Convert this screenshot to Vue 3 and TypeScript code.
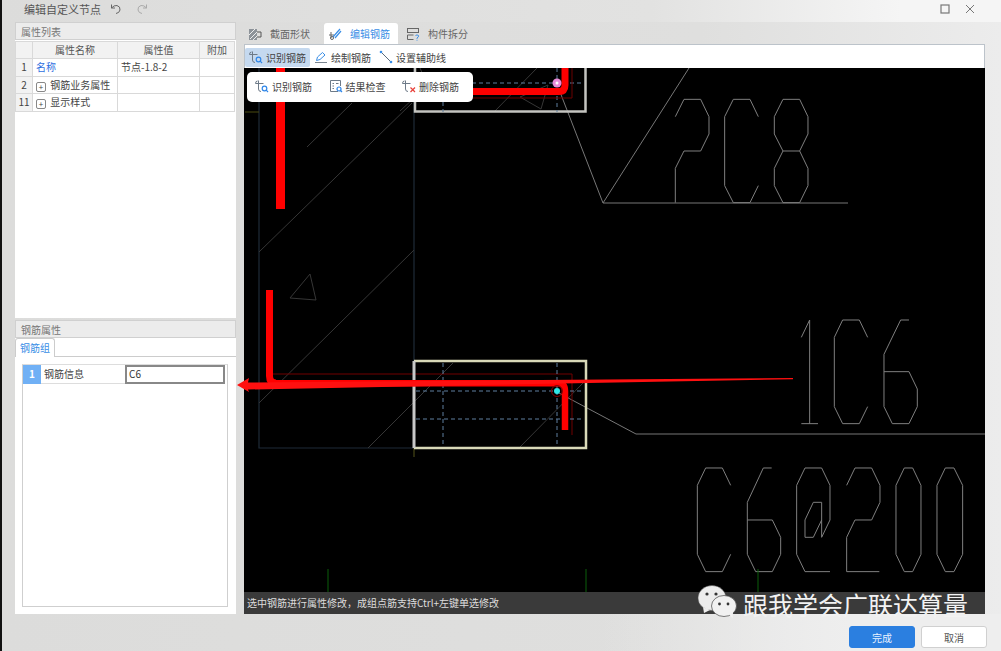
<template>
  <div class="window">
    <!-- 共用图标 -->
    <svg class="icon-defs" width="0" height="0">
      <symbol id="ic-rebar" viewBox="0 0 14 14">
        <path d="M.5 4.500h8M3.500 1.500v8.500q0 2.500 2.500 2.500M.5 4.500q0-2.500 2-2.500" fill="none" stroke="#6d7a88" stroke-width="1" />
        <circle cx="9.500" cy="9.500" r="2.300" fill="none" stroke="#2f86e8" stroke-width="1.200" />
        <path d="M11.200 11.200l1.800 1.800" stroke="#2f86e8" stroke-width="1.200" />
      </symbol>
      <symbol id="ic-check" viewBox="0 0 14 14">
        <path d="M9 12.500H1.500v-11h10V7" fill="none" stroke="#6d7a88" stroke-width="1" />
        <path d="M3.500 4.500h1.500M7 4.500h2.500M3.500 7h1.500M3.500 9.500h1.500" stroke="#6d7a88" stroke-width="1" />
        <circle cx="10" cy="10" r="2" fill="none" stroke="#2f86e8" stroke-width="1.200" />
        <path d="M11.500 11.500l1.500 1.500" stroke="#2f86e8" stroke-width="1.200" />
      </symbol>
      <symbol id="ic-delete" viewBox="0 0 14 14">
        <path d="M.5 4.500h8M3.500 1.500v8.500q0 2.500 2.500 2.500M.5 4.500q0-2.500 2-2.500" fill="none" stroke="#6d7a88" stroke-width="1" />
        <path d="M8.500 8.500l4.500 4.500M13 8.500l-4.500 4.500" stroke="#e8403a" stroke-width="1.200" />
      </symbol>
    </svg>

    <div class="titlebar">
      <span class="title">编辑自定义节点</span>
      <svg class="undo" width="12" height="12" viewBox="0 0 12 12">
        <path d="M1.500 1.500v3.500h3.500M1.500 5Q4 2 7 2.500q3.500 1 3 4.500-.6 3-4 3.500" fill="none" stroke="#666" stroke-width="1" />
      </svg>
      <svg class="redo" width="12" height="12" viewBox="0 0 12 12">
        <path d="M10.500 1.500v3.500H7M10.500 5Q8 2 5 2.500q-3.500 1-3 4.500.6 3 4 3.500" fill="none" stroke="#aaa" stroke-width="1" />
      </svg>
      <span class="grow"></span>
      <svg class="win-btn" width="10" height="10" viewBox="0 0 10 10">
        <rect x="1" y="1" width="8" height="8" fill="none" stroke="#777" stroke-width="1.200" />
      </svg>
      <svg class="win-btn" width="10" height="10" viewBox="0 0 10 10">
        <path d="M1 1l8 8M9 1l-8 8" stroke="#777" stroke-width="1" />
      </svg>
    </div>

    <div class="main">
      <div class="left">
        <section class="panel list-panel">
          <div class="panel-head">属性列表</div>
          <table class="prop-table">
            <colgroup>
              <col class="c-idx" />
              <col class="c-name" />
              <col class="c-val" />
              <col class="c-add" />
            </colgroup>
            <thead>
              <tr>
                <th></th>
                <th>属性名称</th>
                <th>属性值</th>
                <th>附加</th>
              </tr>
            </thead>
            <tbody>
              <tr v-for="row in propRows" :key="row.idx">
                <td class="idx">{{ row.idx }}</td>
                <td :class="{ 'link-name': !row.expand }">
                  <span v-if="row.expand" class="plus">+</span>
                  {{ row.name }}
                </td>
                <td>{{ row.value }}</td>
                <td></td>
              </tr>
            </tbody>
          </table>
        </section>

        <section class="panel rebar-panel">
          <div class="panel-head">钢筋属性</div>
          <div class="sub-tabs"><span class="sub-tab">钢筋组</span></div>
          <div class="rebar-body">
            <div class="rebar-box">
              <div class="rebar-row">
                <span class="rebar-idx">1</span>
                <span class="rebar-label">钢筋信息</span>
                <span class="rebar-input">C6</span>
              </div>
            </div>
          </div>
        </section>
      </div>

      <div class="right">
        <div class="tabs">
          <div class="tab">
            <svg width="14" height="14" viewBox="0 0 14 14">
              <rect x="1" y="2" width="8" height="11" fill="#8d9399" />
              <path d="M1 8l6-6M2 12l7-7M5 13l4-4" stroke="#eee" stroke-width="1" />
              <path d="M9 5h4v5H9" fill="none" stroke="#555" stroke-width="1" />
            </svg>
            截面形状
          </div>
          <div class="tab active">
            <svg width="14" height="14" viewBox="0 0 14 14">
              <path d="M3 5v6M1 8h5" fill="none" stroke="#666" stroke-width="1" />
              <path d="M5 10L12 2M7 11l6-7" fill="none" stroke="#3a8ee6" stroke-width="1.200" />
              <circle cx="4" cy="11" r="1.500" fill="none" stroke="#666" stroke-width="1" />
            </svg>
            编辑钢筋
          </div>
          <div class="tab">
            <svg width="14" height="14" viewBox="0 0 14 14">
              <rect x="1.500" y="1.500" width="11" height="4" fill="none" stroke="#666" stroke-width="1" />
              <path d="M1.500 8h6M1.500 8v4.500h6" fill="none" stroke="#666" stroke-width="1" />
              <path d="M9.500 8.500q1.500-1.200 3 0 .5 1.500-1.500 2.500v.8M11 12.800v.8" fill="none" stroke="#3a8ee6" stroke-width="1" />
            </svg>
            构件拆分
          </div>
        </div>

        <div class="toolbar">
          <div class="tool active">
            <svg width="14" height="14"><use href="#ic-rebar" /></svg>
            识别钢筋
          </div>
          <div class="tool">
            <svg width="14" height="14" viewBox="0 0 14 14">
              <path d="M1 12.500h12" stroke="#7a8590" stroke-width="1" />
              <path d="M2.500 10.500l1-3.500 5-4.500 2.500 2.500-5 4.500z" fill="none" stroke="#3a8ee6" stroke-width="1" />
            </svg>
            绘制钢筋
          </div>
          <div class="tool">
            <svg width="14" height="14" viewBox="0 0 14 14">
              <path d="M1.500 1.500l11 11" stroke="#5a6a7a" stroke-width="1" />
              <circle cx="2" cy="2" r="1.300" fill="#3a8ee6" />
              <circle cx="12" cy="12" r="1.300" fill="#3a8ee6" />
            </svg>
            设置辅助线
          </div>
        </div>

        <div class="canvas">
          <svg class="drawing" width="741" height="524" viewBox="244 68 741 524">
            <!-- 结构轮廓 -->
            <g fill="none" stroke="#1f2b38" stroke-width="1.200">
              <path d="M259 68V448H414V68" />
            </g>
            <path d="M245 112H259" stroke="#4a4a10" stroke-width="1" />
            <path d="M414 448V457" stroke="#55551a" stroke-width="1" />

            <!-- 填充斜线 -->
            <g fill="none" stroke="#363636" stroke-width="1">
              <path d="M259 252L412 103" />
              <path d="M307 147L352 103" />
              <path d="M259 403L414 250" />
              <path d="M368 448L453 363" />
              <path d="M520 447L583 383" />
              <path d="M494 112L537 68" />
              <path d="M400 111L414 98" />
              <path d="M420 68L423 75" />
              <path d="M310 274L290 298L316 300Z" />
              <path d="M520 97L548 85L541 109L520 97" />
            </g>

            <!-- 引线 -->
            <g fill="none" stroke="#777" stroke-width="1">
              <path d="M557 392L636 434H985" />
              <path d="M560 92L603 203H848" />
              <path d="M603 203L689 68" />
            </g>

            <!-- 上部箍筋框 -->
            <path d="M415 68V111.500H585.500V68" fill="none" stroke="#c4c4c0" stroke-width="2.500" />
            <g fill="none" stroke="#5f7f9f" stroke-width="1" stroke-dasharray="4 3">
              <path d="M416 83H584" />
              <path d="M557 68V112" />
              <path d="M443 102V112" />
            </g>
            <path d="M473 98H572V68" fill="none" stroke="#6a0000" stroke-width="1" />
            <path d="M473 91.500H559Q565 91.500 565 85V68" fill="none" stroke="#ff0000" stroke-width="7" />
            <circle cx="557" cy="83" r="4.500" fill="#e88ad8" />
            <circle cx="557" cy="83" r="1.500" fill="#fff" />

            <!-- 左侧红色钢筋 -->
            <rect x="276" y="68" width="9" height="141" fill="#ff0000" />
            <path d="M269.500 290V376Q269.500 383 276 383" fill="none" stroke="#ff0000" stroke-width="7" />
            <path d="M273 374H572V435" fill="none" stroke="#700000" stroke-width="1" />

            <!-- 下部箍筋框 -->
            <path d="M414 361H586V448H414" fill="none" stroke="#d9d9b8" stroke-width="2.500" />
            <path d="M414 361V448" fill="none" stroke="#c8c8c8" stroke-width="3" />
            <g fill="none" stroke="#5f7f9f" stroke-width="1" stroke-dasharray="4 3">
              <path d="M416 391H584" />
              <path d="M416 419H584" />
              <path d="M443 363V446" />
              <path d="M557 363V446" />
            </g>
            <path d="M270 383.300H558Q565 383.300 565 391V430" fill="none" stroke="#ff0000" stroke-width="6.500" />
            <circle cx="557" cy="391" r="5.500" fill="none" stroke="#8a0000" stroke-width="1" />
            <circle cx="557" cy="391" r="3" fill="#2fe6e6" />

            <!-- 标注箭头 -->
            <path d="M237 385L249 378L248 382.500L793 378L793 379.200L248 389.500L249 392Z" fill="#ff1010" />

            <!-- 2C8 -->
            <g transform="translate(590 70) scale(.3333)" fill="none" stroke="#808080" stroke-width="3">
              <polyline v-for="(p, i) in text2c8" :key="i" :points="p" />
            </g>
            <!-- 1C6 和 C6@200 -->
            <g transform="translate(680 300) scale(.3333)" fill="none" stroke="#808080" stroke-width="3">
              <polyline v-for="(p, i) in textLower" :key="i" :points="p" />
            </g>

            <!-- 绿色轴线 -->
            <g stroke="#0b5e0b" stroke-width="1">
              <path d="M328 569V592" />
              <path d="M586 569V592" />
              <path d="M758 569V592" />
            </g>
          </svg>

          <div class="popup">
            <div class="pop-item">
              <svg width="14" height="14"><use href="#ic-rebar" /></svg>
              识别钢筋
            </div>
            <div class="pop-item">
              <svg width="14" height="14"><use href="#ic-check" /></svg>
              结果检查
            </div>
            <div class="pop-item">
              <svg width="14" height="14"><use href="#ic-delete" /></svg>
              删除钢筋
            </div>
          </div>

          <div class="status">选中钢筋进行属性修改，成组点筋支持Ctrl+左键单选修改</div>

          <div class="watermark">
            <svg class="wechat" width="42" height="35" viewBox="0 0 42 35">
              <ellipse cx="15" cy="13" rx="14" ry="12.500" fill="#ececec" stroke="#555" stroke-width=".5" />
              <path d="M6 22l1 6 6-3z" fill="#ececec" />
              <circle cx="10" cy="9" r="1.600" fill="#333" />
              <circle cx="19" cy="9" r="1.600" fill="#333" />
              <ellipse cx="27" cy="21" rx="12.500" ry="10.500" fill="#f1f1f1" stroke="#444" stroke-width=".7" />
              <path d="M32 29l3.500 4.500 .5-6z" fill="#f1f1f1" />
              <circle cx="22.500" cy="19" r="1.400" fill="#333" />
              <circle cx="31" cy="19" r="1.400" fill="#333" />
            </svg>
            <span class="wm-text">跟我学会广联达算量</span>
          </div>
        </div>
      </div>
    </div>

    <div class="footer">
      <button class="btn primary">完成</button>
      <button class="btn">取消</button>
    </div>
  </div>
</template>

<script setup lang="ts">
interface PropRow {
  idx: number;
  name: string;
  value: string;
  expand: boolean;
}

const propRows: PropRow[] = [
  { idx: 1, name: '名称', value: '节点-1.8-2', expand: false },
  { idx: 2, name: '钢筋业务属性', value: '', expand: true },
  { idx: 11, name: '显示样式', value: '', expand: true },
];

// CAD 单线字，坐标按参考图放大 3 倍记录
const text2c8: string[] = [
  '256,140 282,88 332,88 357,140 357,192 332,243 282,243 256,295 256,398',
  '505,140 480,88 430,88 404,140 404,347 430,398 480,398 505,347',
  '579,243 553,192 553,140 579,88 629,88 654,140 654,192 629,243 579,243 553,295 553,347 579,398 629,398 654,347 654,295 629,243',
];

const textLower: string[] = [
  // 1C6
  '364,112 389,60 389,371',
  '364,371 414,371',
  '563,112 538,60 488,60 463,112 463,320 488,371 538,371 563,320',
  '687,60 662,60 612,163 612,320 637,371 687,371 712,320 712,267 687,215 612,215',
  // C6@200
  '152,556 127,504 77,504 52,556 52,763 77,815 127,815 152,763',
  '275,504 250,504 202,607 202,763 227,815 277,815 302,763 302,712 277,660 202,660',
  '450,815 375,815 350,763 350,556 375,504 425,504 450,556 450,660 425,712 425,607 400,607 375,660 375,712 400,712 425,660',
  '500,556 525,504 575,504 600,556 600,607 575,660 525,660 500,712 500,815 598,815',
  '673,504 698,504 723,556 723,763 698,815 673,815 648,763 648,556 673,504',
  '796,504 822,504 848,556 848,763 822,815 796,815 771,763 771,556 796,504',
];
</script>

<style>
html,
body {
  margin: 0;
  overflow: hidden;
}
</style>

<style scoped>
.window {
  box-sizing: border-box;
  width: 1001px;
  height: 651px;
  display: flex;
  flex-direction: column;
  border-left: 2px solid #111;
  background: linear-gradient(90deg, #dcdcdb 0%, #dfdfde 70%, #ececec 100%);
  font-family: "Noto Sans CJK SC", "Noto Sans", sans-serif;
  font-size: 10px;
  color: #444;
  overflow: hidden;
}

.icon-defs {
  position: absolute;
}

/* 标题栏 */
.titlebar {
  height: 22px;
  display: flex;
  align-items: center;
  padding: 0 26px 4px 22px;
  box-sizing: border-box;
  background: linear-gradient(90deg, #dcdcdb 0%, #e2e2e1 65%, #f5f5f5 90%);
}
.title {
  font-size: 11px;
  color: #555;
}
.undo {
  margin-left: 9px;
}
.redo {
  margin-left: 14px;
}
.grow {
  flex: 1;
}
.win-btn {
  margin-left: 15px;
}

.main {
  height: 592px;
  display: flex;
  gap: 8px;
  padding-left: 13px;
}

/* 左侧面板 */
.left {
  width: 221px;
  display: flex;
  flex-direction: column;
  gap: 2px;
}
.panel {
  background: #fff;
  display: flex;
  flex-direction: column;
}
.list-panel {
  height: 296px;
}
.rebar-panel {
  flex: 1;
}
.panel-head {
  height: 18px;
  line-height: 18px;
  box-sizing: border-box;
  padding-left: 5px;
  background: #ececec;
  border: 1px solid #d0d0d0;
  color: #777;
}
.prop-table {
  width: 219px;
  border-collapse: collapse;
  table-layout: fixed;
  margin-top: 1px;
}
.c-idx {
  width: 17px;
}
.c-name {
  width: 85px;
}
.c-val {
  width: 82px;
}
.c-add {
  width: 35px;
}
.prop-table th,
.prop-table td {
  border: 1px solid #d9d9d9;
  padding: 0;
  font-weight: 400;
  white-space: nowrap;
  overflow: hidden;
}
.prop-table th {
  height: 16px;
  line-height: 16px;
  background: #f2f2f2;
  text-align: center;
  color: #555;
}
.prop-table td {
  height: 16.5px;
  line-height: 14px;
  padding-left: 3px;
  color: #444;
}
.prop-table td.idx {
  background: #f2f2f2;
  padding: 0;
  text-align: center;
}
.prop-table td.link-name {
  color: #2f6fe0;
}
.plus {
  display: inline-block;
  box-sizing: border-box;
  width: 10px;
  height: 10px;
  margin-right: 2px;
  border: 1px solid #888;
  border-radius: 2px;
  font-size: 8px;
  line-height: 8px;
  text-align: center;
  vertical-align: -1px;
}
.sub-tabs {
  height: 19px;
  background: #fff;
  border-bottom: 1px solid #ccc;
  box-sizing: border-box;
}
.sub-tab {
  display: inline-block;
  box-sizing: border-box;
  width: 40px;
  height: 19px;
  line-height: 17px;
  text-align: center;
  color: #3a8ee6;
  background: #fff;
  border: 1px solid #ccc;
  border-bottom: none;
  border-radius: 3px 3px 0 0;
}
.rebar-body {
  flex: 1;
  padding: 7px 8px 7px 7px;
  display: flex;
}
.rebar-box {
  flex: 1;
  border: 1px solid #cfcfcf;
  border-top-color: #ddd;
}
.rebar-row {
  display: grid;
  grid-template-columns: 18px 84px 100px;
  height: 18px;
  line-height: 18px;
}
.rebar-idx {
  background: #70b0f5;
  color: #fff;
  text-align: center;
  font-weight: 700;
}
.rebar-label {
  padding-left: 3px;
  border-bottom: 1px solid #ddd;
}
.rebar-input {
  box-sizing: border-box;
  border: 2px solid #888;
  padding-left: 2px;
  line-height: 14px;
  color: #333;
}

/* 右侧主区 */
.right {
  width: 741px;
  display: flex;
  flex-direction: column;
}
.tabs {
  box-sizing: border-box;
  height: 22px;
  padding-top: 1px;
  display: flex;
  gap: 6px;
}
.tab {
  display: flex;
  align-items: center;
  gap: 8px;
  padding: 0 8px 0 4px;
  color: #666;
  border-radius: 3px 3px 0 0;
}
.tab:last-child {
  margin-left: -2px;
}
.tab.active {
  background: #fff;
  color: #3a8ee6;
}
.toolbar {
  box-sizing: border-box;
  height: 24px;
  display: flex;
  align-items: center;
  padding-top: 1px;
  background: #fff;
  border: 1px solid #bcc3ca;
  border-bottom: none;
}
.tool {
  display: flex;
  align-items: center;
  gap: 3px;
  height: 19px;
  padding: 0 4px;
  color: #444;
  border-radius: 2px;
}
.tool.active {
  background: #c5d9ef;
}
.canvas {
  position: relative;
  flex: 1;
  display: flex;
  flex-direction: column;
  background: #000;
}
.drawing {
  display: block;
  overflow: visible;
  position: relative;
  z-index: 2;
}
.popup {
  position: absolute;
  left: 3px;
  top: 4px;
  z-index: 3;
  box-sizing: border-box;
  width: 226px;
  height: 30px;
  display: flex;
  align-items: center;
  gap: 16.5px;
  padding: 0 0 2px 8px;
  background: #fff;
  border-radius: 5px;
  color: #444;
}
.pop-item {
  display: flex;
  align-items: center;
  gap: 3px;
}
.status {
  flex: 1;
  background: #3a3a3a;
  color: #ddd;
  padding-left: 3px;
  line-height: 22px;
}
.watermark {
  position: absolute;
  left: 453px;
  top: 520px;
  z-index: 4;
  display: flex;
  align-items: center;
  gap: 4px;
}
.wechat {
  margin-top: -3px;
}
.wm-text {
  font-size: 25px;
  line-height: 30px;
  color: #f2f2f2;
  white-space: nowrap;
}

/* 底部按钮 */
.footer {
  flex: 1;
  display: flex;
  justify-content: flex-end;
  align-items: flex-start;
  gap: 6px;
  padding: 12px 14px 0 0;
  background: linear-gradient(90deg, transparent 60%, #eeeeee 85%);
}
.btn {
  width: 66px;
  height: 22px;
  padding: 0;
  border: 1px solid #d0d0d0;
  border-radius: 3px;
  background: #fff;
  color: #555;
  font-family: inherit;
  font-size: 10px;
}
.btn.primary {
  background: #2b7fe0;
  border-color: #2b7fe0;
  color: #e8f2ff;
}
</style>
